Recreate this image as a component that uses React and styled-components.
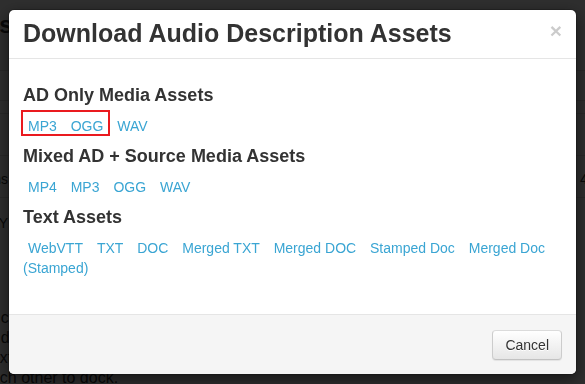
import React from "react";
import styled, { createGlobalStyle } from "styled-components";

const Global = createGlobalStyle`
  * { box-sizing: border-box; }
  html, body { margin: 0; padding: 0; }
  body {
    font-family: "Liberation Sans", Arial, Helvetica, sans-serif;
    font-size: 14px;
    line-height: 20px;
    color: #333;
    background: #fff;
    overflow: hidden;
  }
`;

/* ---------- page behind the dialog ---------- */
const Page = styled.div`
  width: 585px;
  height: 384px;
  overflow: hidden;
  display: flex;
  flex-direction: column;
`;

const PageTitle = styled.h1`
  margin: 10px 0 0 -66px;
  font-size: 24px;
  line-height: 30px;
  font-weight: bold;
  color: #333;
`;

const Table = styled.div`
  margin-top: 30px;
  display: flex;
  flex-direction: column;
`;

const TableRow = styled.div`
  height: ${(p) => p.$h}px;
  border-top: 1px solid #ddd;
  display: flex;
  justify-content: space-between;
  align-items: flex-end;
  padding-bottom: 8px;
  font-size: 14px;
`;

const EdgeCell = styled.span`
  width: 80px;
  white-space: nowrap;
  text-align: ${(p) => (p.$right ? "left" : "right")};
  margin: ${(p) => (p.$right ? "0 -75px 0 0" : "0 0 0 -72px")};
`;

const Para = styled.p`
  margin: auto 0 0 -18px;
  font-size: 16px;
  line-height: 20px;
  color: #333;
  transform: translateY(4px);
`;

/* ---------- dialog ---------- */
const Backdrop = styled.div`
  position: fixed;
  inset: 0;
  background: rgba(0, 0, 0, 0.82);
  display: flex;
  align-items: flex-start;
  padding: 9px 8px 0;
`;

const Modal = styled.div`
  flex: none;
  width: 569px;
  background: #fff;
  background-clip: padding-box;
  border: 1px solid rgba(0, 0, 0, 0.2);
  border-radius: 6px;
  box-shadow: 0 5px 15px rgba(0, 0, 0, 0.5);
  overflow: hidden;
  display: flex;
  flex-direction: column;
`;

const Header = styled.div`
  display: flex;
  justify-content: space-between;
  align-items: flex-start;
  padding: 10px 14px 11px;
  border-bottom: 1px solid #e5e5e5;
`;

const Title = styled.h4`
  margin: 0;
  font-size: 25px;
  line-height: 27px;
  font-weight: bold;
  color: #333;
`;

const Close = styled.button`
  border: 0;
  background: none;
  padding: 0;
  cursor: pointer;
  font-family: "Liberation Sans", Arial, sans-serif;
  font-size: 21px;
  font-weight: bold;
  line-height: 21px;
  color: #000;
  opacity: 0.2;
  text-shadow: 0 1px 0 #fff;
`;

const Body = styled.div`
  padding: 16px 14px 36px;
`;

const SectionTitle = styled.h4`
  margin: 10px 0 11px;
  font-size: 18px;
  line-height: 20px;
  font-weight: bold;
  color: #333;
`;

const LinkRow = styled.div`
  font-size: 14px;
  line-height: 20px;
`;

const AssetLink = styled.a`
  color: #3aa5d3;
  text-decoration: none;
  padding: 0 5px;
  cursor: pointer;
`;

const Highlight = styled.span`
  display: inline-block;
  position: relative;
  &::after {
    content: "";
    position: absolute;
    top: -6px;
    bottom: 0;
    left: -2px;
    right: -2px;
    border: 2px solid #ea1a1f;
    pointer-events: none;
  }
`;

const Footer = styled.div`
  display: flex;
  justify-content: flex-end;
  padding: 15px 14px 14px;
  border-top: 1px solid #e5e5e5;
  background: #f5f5f5;
`;

const Button = styled.button`
  height: 30px;
  padding: 0 12px;
  font-family: "Liberation Sans", Arial, sans-serif;
  font-size: 14px;
  line-height: 28px;
  color: #333;
  border: 1px solid #ccc;
  border-color: #dbdbdb #ccc #c2c2c2;
  border-radius: 4px;
  background: linear-gradient(to bottom, #fff 0%, #e6e6e6 100%);
  text-shadow: 0 1px 0 #fff;
  box-shadow: inset 0 1px 0 rgba(255, 255, 255, 0.15), 0 1px 1px rgba(0, 0, 0, 0.075);
  cursor: pointer;
`;

function Links({ items }) {
  return items.map((t, i) => (
    <React.Fragment key={t}>
      {i > 0 && " "}
      <AssetLink>{t}</AssetLink>
    </React.Fragment>
  ));
}

export default function App() {
  return (
    <>
      <Global />
      <Page>
        <PageTitle>Assets</PageTitle>
        <Table>
          <TableRow $h={30} />
          <TableRow $h={13} />
          <TableRow $h={42} />
          <TableRow $h={42}>
            <EdgeCell>Descriptions</EdgeCell>
            <EdgeCell $right>45</EdgeCell>
          </TableRow>
          <TableRow $h={44}>
            <EdgeCell>Y</EdgeCell>
          </TableRow>
        </Table>
        <Para>
          Click on the caption panels
          <br />
          or drag them toward
          <br />
          next to one another or
          <br />
          each other to dock.
        </Para>
      </Page>
      <Backdrop>
        <Modal role="dialog">
          <Header>
            <Title>Download Audio Description Assets</Title>
            <Close aria-label="Close">×</Close>
          </Header>
          <Body>
            <SectionTitle>AD Only Media Assets</SectionTitle>
            <LinkRow>
              <Highlight>
                <AssetLink>MP3</AssetLink> <AssetLink>OGG</AssetLink>
              </Highlight>{" "}
              <AssetLink>WAV</AssetLink>
            </LinkRow>
            <SectionTitle>Mixed AD + Source Media Assets</SectionTitle>
            <LinkRow>
              <Links items={["MP4", "MP3", "OGG", "WAV"]} />
            </LinkRow>
            <SectionTitle>Text Assets</SectionTitle>
            <LinkRow>
              <Links
                items={[
                  "WebVTT",
                  "TXT",
                  "DOC",
                  "Merged TXT",
                  "Merged DOC",
                  "Stamped Doc",
                  "Merged Doc (Stamped)",
                ]}
              />
            </LinkRow>
          </Body>
          <Footer>
            <Button>Cancel</Button>
          </Footer>
        </Modal>
      </Backdrop>
    </>
  );
}
